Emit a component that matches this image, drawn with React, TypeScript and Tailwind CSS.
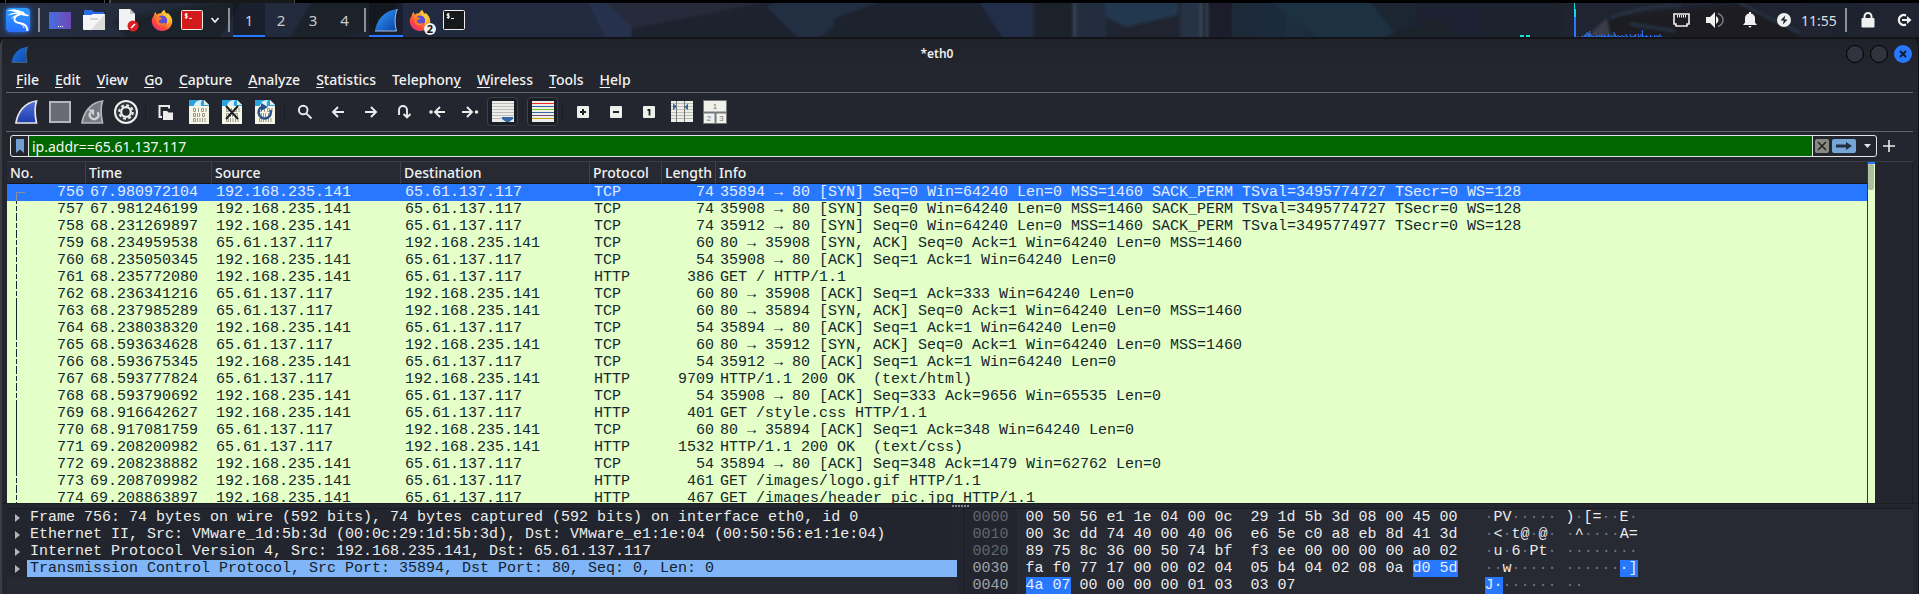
import React from "react";

type Line = "start" | "dash" | "solid";
type Packet = [number, string, string, string, string, number, string];

const A = "192.168.235.141";
const B = "65.61.137.117";

const packets: Packet[] = [
  [756, "67.980972104", A, B, "TCP", 74, "35894 → 80 [SYN] Seq=0 Win=64240 Len=0 MSS=1460 SACK_PERM TSval=3495774727 TSecr=0 WS=128"],
  [757, "67.981246199", A, B, "TCP", 74, "35908 → 80 [SYN] Seq=0 Win=64240 Len=0 MSS=1460 SACK_PERM TSval=3495774727 TSecr=0 WS=128"],
  [758, "68.231269897", A, B, "TCP", 74, "35912 → 80 [SYN] Seq=0 Win=64240 Len=0 MSS=1460 SACK_PERM TSval=3495774977 TSecr=0 WS=128"],
  [759, "68.234959538", B, A, "TCP", 60, "80 → 35908 [SYN, ACK] Seq=0 Ack=1 Win=64240 Len=0 MSS=1460"],
  [760, "68.235050345", A, B, "TCP", 54, "35908 → 80 [ACK] Seq=1 Ack=1 Win=64240 Len=0"],
  [761, "68.235772080", A, B, "HTTP", 386, "GET / HTTP/1.1"],
  [762, "68.236341216", B, A, "TCP", 60, "80 → 35908 [ACK] Seq=1 Ack=333 Win=64240 Len=0"],
  [763, "68.237985289", B, A, "TCP", 60, "80 → 35894 [SYN, ACK] Seq=0 Ack=1 Win=64240 Len=0 MSS=1460"],
  [764, "68.238038320", A, B, "TCP", 54, "35894 → 80 [ACK] Seq=1 Ack=1 Win=64240 Len=0"],
  [765, "68.593634628", B, A, "TCP", 60, "80 → 35912 [SYN, ACK] Seq=0 Ack=1 Win=64240 Len=0 MSS=1460"],
  [766, "68.593675345", A, B, "TCP", 54, "35912 → 80 [ACK] Seq=1 Ack=1 Win=64240 Len=0"],
  [767, "68.593777824", B, A, "HTTP", 9709, "HTTP/1.1 200 OK  (text/html)"],
  [768, "68.593790692", A, B, "TCP", 54, "35908 → 80 [ACK] Seq=333 Ack=9656 Win=65535 Len=0"],
  [769, "68.916642627", A, B, "HTTP", 401, "GET /style.css HTTP/1.1"],
  [770, "68.917081759", B, A, "TCP", 60, "80 → 35894 [ACK] Seq=1 Ack=348 Win=64240 Len=0"],
  [771, "69.208200982", B, A, "HTTP", 1532, "HTTP/1.1 200 OK  (text/css)"],
  [772, "69.208238882", A, B, "TCP", 54, "35894 → 80 [ACK] Seq=348 Ack=1479 Win=62762 Len=0"],
  [773, "69.208709982", A, B, "HTTP", 461, "GET /images/logo.gif HTTP/1.1"],
  [774, "69.208863897", A, B, "HTTP", 467, "GET /images/header_pic.jpg HTTP/1.1"],
];

const solidRows = [763, 764, 769, 770, 771, 772];
const lineFor = (no: number): Line => (no === 756 ? "start" : solidRows.includes(no) ? "solid" : "dash");

const details = [
  "Frame 756: 74 bytes on wire (592 bits), 74 bytes captured (592 bits) on interface eth0, id 0",
  "Ethernet II, Src: VMware_1d:5b:3d (00:0c:29:1d:5b:3d), Dst: VMware_e1:1e:04 (00:50:56:e1:1e:04)",
  "Internet Protocol Version 4, Src: 192.168.235.141, Dst: 65.61.137.117",
  "Transmission Control Protocol, Src Port: 35894, Dst Port: 80, Seq: 0, Len: 0",
];

/* A pair of tildes encloses the highlighted bytes. */
const hexRows = [
  { off: "0000", hex: "00 50 56 e1 1e 04 00 0c  29 1d 5b 3d 08 00 45 00", asc: "·PV····· )·[=··E·" },
  { off: "0010", hex: "00 3c dd 74 40 00 40 06  e6 5e c0 a8 eb 8d 41 3d", asc: "·<·t@·@· ·^····A=" },
  { off: "0020", hex: "89 75 8c 36 00 50 74 bf  f3 ee 00 00 00 00 a0 02", asc: "·u·6·Pt· ········" },
  { off: "0030", hex: "fa f0 77 17 00 00 02 04  05 b4 04 02 08 0a ~d0 5d~", asc: "··w····· ······~·]~", bright: true },
  { off: "0040", hex: "~4a 07~ 00 00 00 00 01 03  03 07", asc: "~J·~······ ··", bright: true },
];

function Marked({ text }: { text: string }) {
  return (
    <>
      {text.split("~").map((part, i) =>
        i % 2 ? (
          <mark key={i} className="inline-block h-[17px] bg-[#2777ff] text-[#e6eeff]">{part}</mark>
        ) : (
          <React.Fragment key={i}>
            {part.split(/(·+)/).map((s, j) => (s.startsWith("·") ? <span key={j} className="text-[#70737b]">{s}</span> : s))}
          </React.Fragment>
        )
      )}
    </>
  );
}

function Firefox({ size = 22 }: { size?: number }) {
  return (
    <svg width={size} height={size} viewBox="0 0 24 24" aria-hidden="true">
      <defs>
        <linearGradient id="fx" x1="0.85" y1="0.1" x2="0.2" y2="0.9">
          <stop offset="0" stopColor="#ffe14a" />
          <stop offset="0.4" stopColor="#ff9a25" />
          <stop offset="0.75" stopColor="#ff4a3d" />
          <stop offset="1" stopColor="#f0306d" />
        </linearGradient>
      </defs>
      <path d="M3 7.5c.2-1.800 1-3.400 2.200-4.500 0 1.500.5 2.300 1.300 2.900C8 4.800 9.500 4.500 11 4.700c1-1.700 2-3 3.700-3.900.2 2 1.200 3.200 2.700 4.500l.9-1c3 2.300 4.900 5.500 4.900 9.100 0 6-5 10.600-11.200 10.600S.8 19.200.8 13.200c0-2.200.8-4.200 2.200-5.700z" fill="url(#fx)" />
      <circle cx="12.300" cy="12.500" r="5.400" fill="#5a50d6" />
      <path d="M6 8.500c2 .3 3 .2 4.500.7 1.600.5 1.800 1.500 1 2-1 .7-2.500.6-3 1.600-.4 1.500 1.500 3.300 4 2.800 1.500-.3 2.500-.7 3.500-.2-1.300 2.600-3.300 3.100-5.500 2.700C7 17.400 5 14 6 8.500z" fill="#ff7a2b" />
      <path d="M12.500 6.500c2.500.4 4.500 2 5.200 4.500.4 2 .2 4.500-.9 6 2.700-1.500 3.900-5 2.700-8.200-.6-1.500-1.500-2.700-3-3.500z" fill="#ffc83a" />
    </svg>
  );
}

function Fin({ size, dark = "#0b3fae", light = "#2a86ea", edge = "#9cc4ee" }: { size: number; dark?: string; light?: string; edge?: string }) {
  const id = `fin${size}`;
  return (
    <svg width={size} height={size} viewBox="0 0 24 24" aria-hidden="true">
      <defs>
        <linearGradient id={id} x1="0" y1="0" x2="1" y2="1">
          <stop offset="0.200" stopColor={light} />
          <stop offset="1" stopColor={dark} />
        </linearGradient>
      </defs>
      <path d="M1 23C2.500 12 10 2.500 23.300 1 20.500 8 20.500 16 22.500 23z" fill={`url(#${id})`} />
      <path d="M23.300 1C20.500 8 20.500 16 22.500 23H1" fill="none" stroke={edge} strokeWidth="1" />
    </svg>
  );
}

function Terminal({ red = false }: { red?: boolean }) {
  return (
    <svg width="22" height="20" viewBox="0 0 22 20" aria-hidden="true">
      <rect x="0.500" y="0.500" width="21" height="19" rx="1" fill={red ? "#d41b1b" : "#171a1a"} stroke="#f2eded" />
      <path d="M6.500 4H4.200v1.700h2v1.800H3.800M5.200 3v6M8 8.500h3" fill="none" stroke="#fff" strokeWidth="1" />
    </svg>
  );
}

function Backdrop() {
  return (
    <svg className="absolute inset-0 h-full w-full" viewBox="0 0 1919 39" preserveAspectRatio="none" aria-hidden="true">
      <defs>
        <linearGradient id="lft" x1="0" x2="1">
          <stop offset="0" stopColor="#262f42" />
          <stop offset="0.500" stopColor="#202636" />
          <stop offset="1" stopColor="#252c42" />
        </linearGradient>
        <linearGradient id="rgt" x1="0" x2="1">
          <stop offset="0" stopColor="#1f2937" />
          <stop offset="0.200" stopColor="#1e2d40" />
          <stop offset="0.450" stopColor="#1d2533" />
          <stop offset="1" stopColor="#1d212c" />
        </linearGradient>
        <filter id="soft" x="0" y="0" width="1" height="1"><feGaussianBlur stdDeviation="1.500" /></filter>
      </defs>
      <rect width="1919" height="39" fill="#1f2430" />
      <rect width="640" height="39" fill="url(#lft)" />
      <g filter="url(#soft)">
        <path d="M112 20 250 -4h170l10 22-110 24H130z" fill="#1d202a" />
        <path d="M245 -4h70l-30 50H215z" fill="#283044" opacity=".7" />
        <path d="M400 -4h200l30 50H380z" fill="#242b40" />
        <path d="M600 -4h190L630 30z" fill="#272a3a" />
        <path d="M585 -4h15l32 32-2 18h-20z" fill="#27304d" />
        <path d="M632 28 775 2l40 44H630z" fill="#1f232e" />
        <path d="M766 7 790 -4h105l-50 22-38 28z" fill="#212e42" />
        <path d="M835 18 895 -4h80l35 50H830z" fill="#1f232f" />
        <path d="M975 -4h58v50h-25z" fill="#242f47" />
        <path d="M1034 -4h42v50h-42z" fill="#1e222c" />
        <path d="M1076 -4h30v50h-30z" fill="#202f41" />
        <path d="M1106 -4h72v19l-52 12-20-10z" fill="#22384f" />
        <path d="M1180 -4h22v50h-22z" fill="#253345" />
        <path d="M1201 -4h1v50h-1zM1206 -4h1v50h-1zM1074 -4h1v50h-1z" fill="#50657b" />
        <path d="M1208 -4h24v50h-24z" fill="#1c1f2a" />
        <path d="M1232 -4h330v50h-330z" fill="url(#rgt)" />
        <path d="M1265 -4h100l40 50h-75z" fill="#1f3042" />
        <path d="M1395 32 1437 18l30 24h-90z" fill="#1e212b" />
        <path d="M1590 42l20-26 140-13 60 39z" fill="#1b1c24" />
        <path d="M1592 32l15-14 4 20h-19z" fill="#48485a" opacity=".7" />
        <path d="M1610 18q40-14 70-12M1630 24l45 7M1740 3l60 30" fill="none" stroke="#2c3b50" strokeWidth="2" />
        <path d="M1790 -4h60l20 21-30 20z" fill="#1c212e" />
      </g>
      <path d="M0 37h1919v2H0z" fill="#121419" />
      <path d="M0 0h1919v3H0z" fill="#000" />
      <path d="M5 0h1v3h-1zM104 0h1v3h-1zM109 0h2v3h-2zM294 0h1v3h-1z" fill="#4a4a4a" />
      <path d="M111 0h183v3H111z" fill="#17181a" />
    </svg>
  );
}

function Dragon() {
  return (
    <svg width="24" height="24" viewBox="0 0 24 24" aria-hidden="true">
      <g fill="#fff">
        <path d="M1 2.500C6 1 11 1.200 14.500 3l3 .8 2 2.200 3.500 1-1 1.200-4-.5-2.500-.7C11.500 4.500 7 3 1 2.500z" />
        <path d="M2 7.500C5 5 9 4.200 13 4.800l2 1.400C10 5.500 6 6 2 7.500z" />
        <path d="M4.500 11c2-2.700 4.500-4 8-4.500l1 1C10 8 7 9 4.500 11z" />
      </g>
      <path d="M15 6c-5 1-7 3.500-6.500 6 .7 2.700 3.500 3 7 3.400 4 .6 5.600 3 6 7.600" fill="none" stroke="#fff" strokeWidth="2" />
      <path d="M13.500 15c2.500 1.500 4 3 4.500 5" fill="none" stroke="#fff" strokeWidth="1" />
    </svg>
  );
}

function Bar() {
  return <span className="h-6 w-0.5 shrink-0 bg-[#8d9098]" />;
}

function Task({ label, w, children, active = false }: { label: string; w: string; children: React.ReactNode; active?: boolean }) {
  return (
    <button
      aria-label={label}
      className={`${w} relative flex h-full shrink-0 items-center justify-center ${active ? "border-b-2 border-[#2777ff] bg-black/25 pt-0.5" : ""}`}
    >
      {children}
    </button>
  );
}

const load = [1, 0, 0, 1, 1, 2, 3, 5, 4, 6, 3, 1, 1, 0, 2, 1, 2, 1, 3, 1, 2, 1, 1, 3, 1, 2, 1, 5, 3, 1, 2, 1, 1, 2, 1, 1, 3, 1, 0, 3, 1, 1, 2, 3, 0, 3, 1, 3, 7, 1, 1, 2, 1, 0, 2, 1, 0, 2, 1, 2, 1, 3, 1];

function Taskbar() {
  return (
    <header className="relative h-[39px] shrink-0 font-['Noto_Sans',sans-serif]">
      <Backdrop />
      <div className="relative flex h-[37px] items-center pt-[3px]">
        <Task label="Applications" w="w-9">
          <span className="flex h-6 w-6 items-center justify-center rounded-sm bg-gradient-to-b from-[#2f9cff] to-[#2a70ff] shadow-[0_0_5px_#2777ff]">
            <Dragon />
          </span>
        </Task>
        <span className="w-0.5" />
        <Bar />
        <span className="w-[3px]" />
        <Task label="Show desktop" w="w-[34px]">
          <span className="flex h-[17px] w-[22px] items-end justify-center gap-px bg-gradient-to-r from-[#3f6fe0] to-[#6d48b5] pb-0.5">
            <i className="h-px w-px bg-white" /><i className="h-px w-px bg-white" /><i className="h-px w-px bg-white" />
          </span>
        </Task>
        <Task label="File Manager" w="w-[34px]">
          <svg width="22" height="20" viewBox="0 0 22 20" aria-hidden="true">
            <path d="M1 1q0-1 1-1h7l2 2h9q1 0 1 1v4H1z" fill="#2a6be8" />
            <path d="M0 5h8l2-1h12v15q0 1-1 1H1q-1 0-1-1z" fill="#f5f5f5" />
            <path d="M22 4v16H8z" fill="#dcdcdc" />
            <path d="M7 9h8" stroke="#b4b4b4" />
          </svg>
        </Task>
        <Task label="Text Editor" w="w-[34px]">
          <svg width="22" height="24" viewBox="0 0 22 24" aria-hidden="true">
            <path d="M2 1h11l5 5v16H2z" fill="#f2f2f2" />
            <path d="M13 1v5h5z" fill="#c6c6c6" />
            <circle cx="16" cy="18" r="5.500" fill="#d81f26" />
            <path d="m14 20 4-4" stroke="#fff" strokeWidth="1.600" />
          </svg>
        </Task>
        <Task label="Firefox" w="w-[34px]"><Firefox /></Task>
        <Task label="Terminal" w="w-[26px]"><Terminal red /></Task>
        <Task label="More terminals" w="w-5">
          <svg width="10" height="8" viewBox="0 0 10 8" aria-hidden="true"><path d="m1.500 2 3.500 4 3.500-4" fill="none" stroke="#eee" strokeWidth="1.800" /></svg>
        </Task>
        <span className="w-[3px]" />
        <Bar />
        <span className="w-[3px]" />
        <nav aria-label="Workspaces" className="flex h-full text-[15px] text-[#c9cbd0]">
          <Task label="Workspace 1" w="w-8" active>1</Task>
          <Task label="Workspace 2" w="w-8">2</Task>
          <Task label="Workspace 3" w="w-8">3</Task>
          <Task label="Workspace 4" w="w-[31px]">4</Task>
        </nav>
        <span className="w-1" />
        <Bar />
        <span className="w-[3px]" />
        <Task label="Wireshark" w="w-[34px]" active><Fin size={24} light="#2b8df0" dark="#0a3f9e" /></Task>
        <Task label="Firefox, 2 windows" w="w-[34px]">
          <Firefox />
          <span className="absolute right-px bottom-0.5 flex h-3 w-3 items-center justify-center rounded-full bg-[#f0f0f0] text-[11px] leading-3 font-bold text-[#1a1a1a]">2</span>
        </Task>
        <Task label="Terminal window" w="w-[34px]"><Terminal /></Task>
        <span className="flex-1" />
        <svg className="h-[34px] w-[146px] shrink-0" viewBox="0 0 146 34" aria-label="Load graph">
          <path d="M1 32h4v2H1zM7 32h4v2H7z" fill="#1fe0c8" />
          <path d="M55 0h1v6h1v14h-2z" fill="#18d8e6" />
          <path d="M55 14h2v20h-2z" fill="#2777ff" />
          {load.map((v, i) => (v ? <rect key={i} x={58 + i * 1.350} y={34 - v} width="1.100" height={v} fill="#2777ff" /> : null))}
        </svg>
        <Task label="Network" w="w-8">
          <svg width="17" height="14" viewBox="0 0 17 14" aria-hidden="true">
            <path d="M1 1h15v10h-2v2H3v-2H1z" fill="none" stroke="#f0f0f0" strokeWidth="1.600" />
            <path d="M4.500 2v2.500M6.500 2v2.500M8.500 2v2.500M10.500 2v2.500M12.500 2v2.500" stroke="#f0f0f0" />
          </svg>
        </Task>
        <Task label="Volume" w="w-9">
          <svg width="18" height="16" viewBox="0 0 18 16" aria-hidden="true">
            <path d="M0 5h4l5-5v16l-5-5H0z" fill="#f0f0f0" />
            <path d="M10 4q2.500 1.500 2.500 4T10 12z" fill="#f0f0f0" />
            <path d="M12 1.500q5 2 5 6.500t-5 6.500" fill="none" stroke="#777b84" strokeWidth="1.500" />
          </svg>
        </Task>
        <Task label="Notifications" w="w-[34px]">
          <svg width="14" height="16" viewBox="0 0 14 16" aria-hidden="true">
            <path d="M6 0h2v1.500q4 .8 4 5v4l2 2.500H0l2-2.500v-4q0-4.200 4-5zM5.500 14h3q-.3 1.500-1.500 1.500T5.500 14z" fill="#f0f0f0" />
          </svg>
        </Task>
        <Task label="Power" w="w-[34px]">
          <svg width="14" height="14" viewBox="0 0 14 14" aria-hidden="true">
            <circle cx="7" cy="7" r="7" fill="#f0f0f0" />
            <path d="M8.300 2.500 3.500 7.500h3.200l-.8 4 4.700-5H7.400z" fill="#1d202a" />
          </svg>
        </Task>
        <time className="w-[34px] text-center text-[14px] text-[#dcdde0]">11:55</time>
        <span className="w-2.5" />
        <Bar />
        <Task label="Lock screen" w="w-[42px]">
          <svg width="14" height="16" viewBox="0 0 14 16" aria-hidden="true">
            <path d="M3.500 7V4.500a3.500 3.500 0 0 1 7 0V7" fill="none" stroke="#f0f0f0" strokeWidth="2" />
            <rect x="0.500" y="6" width="13" height="9.500" rx="1" fill="#f0f0f0" />
          </svg>
        </Task>
        <Task label="Log out" w="w-[30px]">
          <svg width="16" height="14" viewBox="0 0 16 14" aria-hidden="true">
            <path d="M10 2.500A5 5 0 1 0 10 11.500" fill="none" stroke="#f0f0f0" strokeWidth="2.200" />
            <path d="M6 6h5V3l4.500 4L11 11V8H6z" fill="#f0f0f0" />
          </svg>
        </Task>
      </div>
    </header>
  );
}

const menus: [string, string, string][] = [
  ["", "F", "ile"], ["", "E", "dit"], ["", "V", "iew"], ["", "G", "o"], ["", "C", "apture"], ["", "A", "nalyze"],
  ["", "S", "tatistics"], ["Telephon", "y", ""], ["", "W", "ireless"], ["", "T", "ools"], ["", "H", "elp"],
];

function Tool({ label, children, pressed = false }: { label: string; children: React.ReactNode; pressed?: boolean }) {
  return (
    <button aria-label={label} className="flex h-[31px] w-[33px] shrink-0 items-center justify-center">
      {pressed ? (
        <span className="flex h-[29px] w-[31px] items-center justify-center rounded-sm border border-[#3d414a] bg-[#1c1e26]">{children}</span>
      ) : (
        children
      )}
    </button>
  );
}

function Sep() {
  return <span className="mx-[3px] h-5 w-px shrink-0 bg-[#1b1d24]" />;
}

function Page({ children }: { children?: React.ReactNode }) {
  return (
    <svg width="20" height="24" viewBox="0 0 20 24" aria-hidden="true">
      <path d="M0 0h15l5 5v19H0z" fill="#f6f6e6" />
      <path d="M0 0h15l5 5v1H0z" fill="#2ba3e0" />
      <path d="M5 5q2-5 8-5-2 3-1 6H5z" fill="#d8eef8" />
      <path d="M15 0v5h5z" fill="#e9e9dc" />
      <g fill="none" stroke="#9a9a8e" strokeWidth="1">
        <path d="M4.500 8.500h2v3h-2zM12.500 8.500h2v3h-2zM9.500 8v4M17 8v4" />
        <path d="M4.500 13.500h2v3h-2zM8.500 13v4M10.500 13v4M13.500 13.500h2v3h-2z" />
        <path d="M4.500 18.500h2v3h-2zM8.500 18v4M11 18v4M13.500 18v4M16 18v4" />
      </g>
      {children}
    </svg>
  );
}

function Glyph({ d }: { d: string }) {
  return (
    <svg width="16" height="16" viewBox="0 0 16 16" aria-hidden="true">
      <path d={d} fill="none" stroke="#ececec" strokeWidth="1.900" />
    </svg>
  );
}

function Key({ children }: { children: React.ReactNode }) {
  return (
    <svg width="12" height="12" viewBox="0 0 12 12" aria-hidden="true">
      <rect width="12" height="12" rx="1" fill="#efefec" />
      {children}
    </svg>
  );
}

function FinTool({ gray = false }: { gray?: boolean }) {
  return (
    <svg width="23" height="24" viewBox="0 0 23 24" aria-hidden="true">
      <defs>
        <linearGradient id="bluefin" x1="0" y1="0" x2="0" y2="1">
          <stop offset="0" stopColor="#5570d8" />
          <stop offset="1" stopColor="#1c3cae" />
        </linearGradient>
      </defs>
      <path d="M1 23C2.500 13 9 2.500 21.500 1 19.500 7 20 16 21.500 23z" fill={gray ? "#777a82" : "url(#bluefin)"} stroke={gray ? "#b5b6b9" : "#e8e8e8"} strokeWidth="1.700" />
      {gray && (
        <>
          <path d="M9.500 12.500a4.300 4.300 0 1 0 7-.3" fill="none" stroke="#d0d1d4" strokeWidth="2.400" />
          <path d="M7 9.500h6v6z" fill="#d0d1d4" />
        </>
      )}
    </svg>
  );
}

function Toolbar() {
  return (
    <div role="toolbar" className="mr-[5px] ml-1 flex h-[39px] shrink-0 items-center border-b border-[#63656c] pb-px pl-1">
      <Tool label="Start capture"><FinTool /></Tool>
      <Tool label="Stop capture">
        <svg width="22" height="22" viewBox="0 0 22 22" aria-hidden="true"><rect x="1" y="1" width="20" height="20" fill="#686b73" stroke="#b5b6ba" strokeWidth="2" /></svg>
      </Tool>
      <Tool label="Restart capture"><FinTool gray /></Tool>
      <Tool label="Capture options">
        <svg width="24" height="24" viewBox="0 0 24 24" aria-hidden="true">
          <circle cx="12" cy="12" r="11" fill="#33353a" stroke="#f0f0f0" strokeWidth="2" />
          <circle cx="12" cy="12" r="6.800" fill="none" stroke="#f0f0f0" strokeWidth="2" strokeDasharray="2.900 2.440" />
          <circle cx="12" cy="12" r="4.800" fill="#26282e" stroke="#f0f0f0" strokeWidth="2.200" />
        </svg>
      </Tool>
      <Sep />
      <Tool label="Open">
        <svg width="15" height="16" viewBox="0 0 15 16" aria-hidden="true">
          <path d="M4 13H1.500V2H11v2.500" fill="none" stroke="#ececec" strokeWidth="2" />
          <path d="M5 7h4l1.500 1.500H15V16H5z" fill="#ececec" />
        </svg>
      </Tool>
      <Tool label="Save"><Page /></Tool>
      <Tool label="Close"><Page><path d="m4 6 12 13M16 6 4 19" stroke="#1e1e20" strokeWidth="2" /></Page></Tool>
      <Tool label="Reload"><Page><path d="M6.500 7A6.200 6.200 0 1 0 15.500 10" fill="none" stroke="#2a4f8e" strokeWidth="2.400" /><path d="M6 3v8l7-4z" fill="#2a4f8e" /></Page></Tool>
      <Sep />
      <Tool label="Find"><Glyph d="M10.500 6a4.300 4.300 0 1 1-8.600 0 4.300 4.300 0 0 1 8.600 0zM9.300 9.300l5.200 5.200" /></Tool>
      <Tool label="Back"><Glyph d="M14 8H3M8 3 3 8l5 5" /></Tool>
      <Tool label="Forward"><Glyph d="M2 8h11M8 3l5 5-5 5" /></Tool>
      <Tool label="Go to packet"><Glyph d="M3 11V6a4 4 0 0 1 8 0v7M7.500 10l3.500 3.500 3.500-3.500" /></Tool>
      <Tool label="First packet">
        <svg width="18" height="16" viewBox="0 0 18 16" aria-hidden="true"><circle cx="3" cy="8" r="1.800" fill="#ececec" /><path d="M17 8H7M12 3 7 8l5 5" fill="none" stroke="#ececec" strokeWidth="1.900" /></svg>
      </Tool>
      <Tool label="Last packet">
        <svg width="18" height="16" viewBox="0 0 18 16" aria-hidden="true"><circle cx="15.500" cy="8" r="1.800" fill="#ececec" /><path d="M1 8h10M6 3l5 5-5 5" fill="none" stroke="#ececec" strokeWidth="1.900" /></svg>
      </Tool>
      <Tool label="Auto scroll" pressed>
        <svg width="22" height="21" viewBox="0 0 22 21" aria-hidden="true">
          <rect width="22" height="21" fill="#ededea" />
          <path d="M0 2.500h22M0 5.500h22M0 8.500h22M0 11.500h22M0 14.500h22M0 17.500h22" stroke="#bcbdb8" />
          <path d="M10 16h11v2l-4 3h-3l-4-3z" fill="#3465a4" />
        </svg>
      </Tool>
      <Sep />
      <Tool label="Colorize" pressed>
        <svg width="22" height="21" viewBox="0 0 22 21" aria-hidden="true">
          <rect width="22" height="21" fill="#ededea" />
          <path d="M0 2.500h22" stroke="#ef2929" />
          <path d="M0 5.500h22M0 11.500h22" stroke="#3465a4" />
          <path d="M0 8.500h22" stroke="#73d216" />
          <path d="M0 14.500h22" stroke="#75507b" />
          <path d="M0 17.500h22" stroke="#c4a000" />
        </svg>
      </Tool>
      <Sep />
      <Tool label="Zoom in"><Key><path d="M3 6h6M6 3v6" stroke="#222" strokeWidth="2" /></Key></Tool>
      <Tool label="Zoom out"><Key><path d="M3 6h6" stroke="#222" strokeWidth="2" /></Key></Tool>
      <Tool label="Normal size"><Key><path d="M4.500 4H6.500V9.500" fill="none" stroke="#222" strokeWidth="1.800" /></Key></Tool>
      <Tool label="Resize columns">
        <svg width="22" height="21" viewBox="0 0 22 21" aria-hidden="true">
          <rect width="22" height="21" fill="#ededea" />
          <path d="M0 2.500h22M0 5.500h22M0 8.500h22M0 11.500h22M0 14.500h22M0 17.500h22" stroke="#bcbdb8" />
          <path d="M5.500 0v21M13.500 0v21" stroke="#777" />
          <path d="M2 2.500 5 4.500v2L2 9zM17 2.500l-3 3v1l3 2.500z" fill="#3465a4" />
        </svg>
      </Tool>
      <Tool label="Layout">
        <svg width="24" height="24" viewBox="0 0 24 24" aria-hidden="true">
          <rect width="24" height="24" fill="#77787a" />
          <path d="M1 1h22v10.500H1zM1 13.500h10.500V23H1zM13.500 13.500H23V23h-9.500z" fill="#f0f0ed" />
          <g fill="#777" fontSize="8" fontFamily="Liberation Sans" textAnchor="middle">
            <text x="12" y="9">1</text><text x="6" y="21">2</text><text x="18.500" y="21">3</text>
          </g>
        </svg>
      </Tool>
    </div>
  );
}

function FilterBar() {
  return (
    <div className="flex h-[29px] shrink-0 items-center pr-[23px] pb-px pl-[8px]">
      <div className="flex h-[22px] flex-1 items-stretch rounded-[3px] border border-[#e4e4e4]">
        <button aria-label="Bookmarks" className="flex w-[18px] items-center justify-center border-r border-[#e4e4e4]">
          <svg width="8" height="14" viewBox="0 0 8 14" aria-hidden="true"><path d="M0 0h8v14l-4-3.500L0 14z" fill="#729fcf" /></svg>
        </button>
        <input
          aria-label="Display filter"
          defaultValue="ip.addr==65.61.137.117"
          className="min-w-0 flex-1 bg-[#006600] pl-[3px] text-[14px] text-[#f8f8f4] outline-none"
        />
        <span className="flex items-center gap-[3px] border-l border-[#e4e4e4] pl-0.5">
          <button aria-label="Clear filter" className="flex h-3.5 w-3.5 items-center justify-center rounded-[2px] bg-[#888a80]">
            <svg width="10" height="10" viewBox="0 0 10 10" aria-hidden="true"><path d="m1 1 8 8M9 1 1 9" stroke="#22242b" strokeWidth="1.600" /></svg>
          </button>
          <button aria-label="Apply filter" className="flex h-3.5 w-6 items-center justify-center rounded-[2px] bg-[#76a5d8]">
            <svg width="16" height="8" viewBox="0 0 16 8" aria-hidden="true"><path d="M0 2.500h10V0l6 4-6 4V5.500H0z" fill="#22303f" /></svg>
          </button>
          <button aria-label="Recent filters" className="flex w-[17px] items-center justify-center">
            <svg width="7" height="4" viewBox="0 0 7 4" aria-hidden="true"><path d="M0 0h7L3.500 4z" fill="#e4e4e4" /></svg>
          </button>
        </span>
      </div>
      <button aria-label="Add filter button" className="ml-[6px] flex shrink-0 items-center justify-center">
        <svg width="12" height="12" viewBox="0 0 12 12" aria-hidden="true"><path d="M6 0v12M0 6h12" stroke="#ececec" strokeWidth="1.600" /></svg>
      </button>
    </div>
  );
}

function RelatedLine({ kind }: { kind: Line }) {
  return (
    <svg width="18" height="17" viewBox="0 0 18 17" aria-hidden="true">
      {kind === "start" && <path d="M18 8.500H9.500V17" fill="none" stroke="#8f9094" />}
      {kind === "solid" && <path d="M9.500 0v17" stroke="#12272e" />}
      {kind === "dash" && <path d="M9.500 0v3M9.500 5v5M9.500 12v5" stroke="#12272e" />}
    </svg>
  );
}

function PacketList() {
  const th = "h-[22px] border-r border-b border-b-[#15171c] border-r-[#3d4048] p-0 pl-[3px] text-left font-medium last:border-r-0";
  return (
    <section className="mr-[5px] ml-[5px] flex min-h-0 flex-1 overflow-hidden border-t border-[#3a3c44]">
      <div className="min-w-0 flex-1 overflow-hidden bg-[#e4ffc7]">
        <table className="w-full table-fixed border-separate border-spacing-0">
          <colgroup>
            <col className="w-[79px]" />
            <col className="w-[126px]" />
            <col className="w-[189px]" />
            <col className="w-[189px]" />
            <col className="w-[72px]" />
            <col className="w-[54px]" />
            <col />
          </colgroup>
          <thead className="bg-[#272a33] text-[14px] leading-[21px] text-[#f2f2f2]">
            <tr>
              {["No.", "Time", "Source", "Destination", "Protocol", "Length", "Info"].map((h) => (
                <th key={h} scope="col" className={th}>{h}</th>
              ))}
            </tr>
          </thead>
          <tbody className="font-['Liberation_Mono',monospace] text-[15px] leading-[17px] whitespace-pre text-[#12272e]">
            {packets.map(([no, time, src, dst, proto, len, info], i) => (
              <tr key={no} className={i === 0 ? "bg-[#2777ff] text-[#e2ecff]" : ""}>
                <td className="p-0 pr-[2px]">
                  <div className="flex h-[17px] justify-between"><RelatedLine kind={lineFor(no)} />{no}</div>
                </td>
                <td className="p-0 pl-1">{time}</td>
                <td className="p-0 pl-1">{src}</td>
                <td className="p-0 pl-1">{dst}</td>
                <td className="p-0 pl-1">{proto}</td>
                <td className="p-0 pr-[2px] text-right">{len}</td>
                <td className="overflow-hidden p-0 pl-1">{info}</td>
              </tr>
            ))}
          </tbody>
        </table>
      </div>
      <div className="w-2 shrink-0 border-l border-[#33363d] bg-[#e4ffc7]">
        <div className="h-0.5 bg-[#2777ff]" />
        <div className="h-[26px] w-1.5 rounded-[2px] bg-[#aebf9f]" />
      </div>
      <div className="w-[38px] shrink-0 border-r border-[#1b1d23]" />
    </section>
  );
}

function Details() {
  return (
    <ul className="min-w-0 flex-1 border-t border-[#1b1d23] bg-[#262832] font-['Liberation_Mono',monospace] text-[15px] leading-[17px] whitespace-pre text-[#ececec]">
      {details.map((d, i) => (
        <li key={d} className="flex bg-[#22252d]">
          <button aria-label="Expand" className="flex w-5 shrink-0 items-center justify-center">
            <svg width="5" height="8" viewBox="0 0 5 8" aria-hidden="true"><path d="M0 0l5 4-5 4z" fill="#b4b5b9" /></svg>
          </button>
          <span className={i === 3 ? "min-w-0 flex-1 overflow-hidden bg-[#80b5f7] pl-[3px] text-[#15202c]" : "min-w-0 flex-1 overflow-hidden pl-[3px]"}>{d}</span>
        </li>
      ))}
    </ul>
  );
}

function HexDump() {
  return (
    <div className="min-w-0 flex-1 border-t border-l border-[#1b1d23] bg-[#272933] font-['Liberation_Mono',monospace] text-[15px] leading-[17px] whitespace-pre text-[#ececec]">
      {hexRows.map((r) => (
        <div key={r.off} className="flex h-[17px]">
          <span className={`w-[53px] shrink-0 bg-[#22252d] pl-[9px] ${r.bright ? "text-[#a0a2a7]" : "text-[#63666e]"}`}>{r.off}</span>
          <span className="w-[468px] shrink-0 pl-[9px]"><Marked text={r.hex} /></span>
          <span><Marked text={r.asc} /></span>
        </div>
      ))}
    </div>
  );
}

export default function App() {
  return (
    <div className="flex h-screen flex-col overflow-hidden bg-[#15171c] font-['Noto_Sans',sans-serif]">
      <Taskbar />
      <main className="flex min-h-0 flex-1 flex-col rounded-t-md border-r border-l-2 border-r-[#111318] border-l-[#3b3d40] bg-[#23262f] bg-gradient-to-b from-[#1f2229] to-[#23262f] to-[30px]">
        <div className="flex h-[30px] shrink-0 items-center pr-[6px] pl-[9px]">
          <Fin size={17} light="#1f6fd8" dark="#0a47a8" edge="#5b7fa8" />
          <h1 className="flex-1 text-center text-[12px] font-semibold text-[#eeeeee]">*eth0</h1>
          <div className="flex gap-1.5">
            <button aria-label="Minimize" className="h-[18px] w-[18px] rounded-full border border-black bg-[#31343f]" />
            <button aria-label="Maximize" className="h-[18px] w-[18px] rounded-full border border-black bg-[#31343f]" />
            <button aria-label="Close window" className="flex h-[18px] w-[18px] items-center justify-center rounded-full bg-[#2777ff]">
              <svg width="8" height="8" viewBox="0 0 8 8" aria-hidden="true"><path d="m1 1 6 6M7 1 1 7" stroke="#101c33" strokeWidth="2" /></svg>
            </button>
          </div>
        </div>
        <nav aria-label="Menu" className="mr-[5px] ml-1 flex h-6 shrink-0 items-start gap-4 border-b border-[#63656c] pl-2.5 text-[14px] leading-[21px] font-medium text-[#f2f2f2]">
          {menus.map(([a, u, b]) => (
            <button key={a + u + b} className="whitespace-nowrap">
              {a}<span className="underline underline-offset-2">{u}</span>{b}
            </button>
          ))}
        </nav>
        <Toolbar />
        <FilterBar />
        <PacketList />
        <div className="flex h-[5px] shrink-0 items-center justify-center border-t border-[#1b1d23]">
          <span className="h-0.5 w-[17px] bg-[repeating-linear-gradient(90deg,#85878d_0_2px,transparent_2px_3px)]" />
        </div>
        <div className="flex shrink-0 pr-[5px] pl-[5px]">
          <Details />
          <span className="w-1.5 shrink-0" />
          <HexDump />
        </div>
      </main>
    </div>
  );
}
